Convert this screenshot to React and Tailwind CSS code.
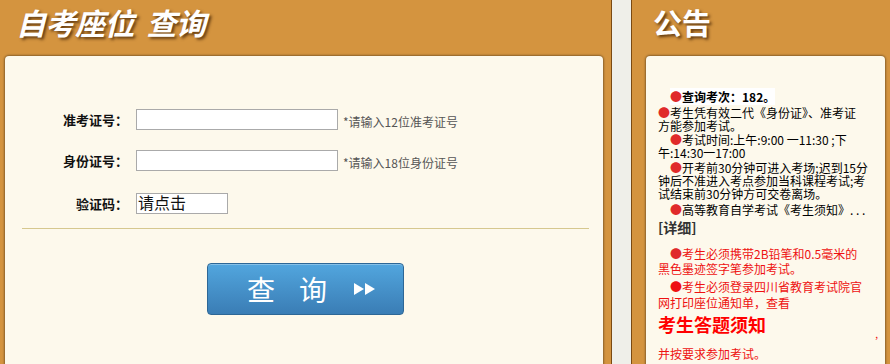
import React from "react";

const cjk = { fontFamily: '"Noto Sans CJK SC", "Noto Sans", sans-serif' };

function Dot() {
  return <span className="text-[#e02a2a]">●</span>;
}

function FormRow({ label, width, hint, children }) {
  return (
    <div className="flex items-center h-[21px]">
      <div className="w-[123px] text-right text-[13px] font-bold text-[#111] leading-[21px]">{label}</div>
      <div className="ml-[8px] flex items-center">
        {children || (
          <input
            type="text"
            className={`${width} h-[21px] bg-white border border-[#aaaaaa] outline-none`}
          />
        )}
        {hint && <span className="ml-[5px] text-[12px] text-[#555] leading-[21px] pt-[4px]">{hint}</span>}
      </div>
    </div>
  );
}

export default function App() {
  return (
    <div style={cjk} className="w-[890px] h-[364px] flex overflow-hidden bg-[#d4943f]">
      {/* 左侧查询 */}
      <div className="w-[611px] flex flex-col bg-[#d4943f]">
        <div className="h-[56px] pl-[16px] pt-[7px]">
          <h1 className="text-[30px] leading-[30px] font-bold italic text-white [text-shadow:2px_2px_3px_rgba(60,30,0,0.75)] tracking-[-0.5px]">
            自考座位&nbsp;&nbsp;查询
          </h1>
        </div>
        <div className="ml-[5px] w-[598px] flex-1 bg-[#fdf9ec] rounded-t-[4px] shadow-[0_0_2px_1px_rgba(0,0,0,0.35)]">
          <div className="pt-[53px] flex flex-col">
            <FormRow label="准考证号：" width="w-[202px]" hint="*请输入12位准考证号" />
            <div className="h-[20px]" />
            <FormRow label="身份证号：" width="w-[202px]" hint="*请输入18位身份证号" />
            <div className="h-[22px]" />
            <FormRow label="验证码：">
              <div className="w-[92px] h-[21px] bg-white border border-[#aaaaaa] text-[16px] leading-[17px] text-[#111] pl-[1px]">
                请点击
              </div>
            </FormRow>
          </div>
          <div className="mt-[14px] ml-[17px] mr-[14px] h-px bg-[#d6c88f]" />
          <div className="mt-[34px] flex justify-center pl-[3px]">
            <button
              type="button"
              className="w-[197px] h-[52px] rounded-[4px] border border-[#2d6796] bg-gradient-to-b from-[#52a6de] to-[#3a7db5] shadow-[inset_0_1px_0_rgba(255,255,255,0.3)] flex items-center pl-[39px] text-white"
            >
              <span className="text-[28px] leading-none">查</span>
              <span className="text-[28px] leading-none ml-[24px]">询</span>
              <svg width="22" height="12" viewBox="0 0 22 12" className="ml-[27px]">
                <polygon points="0,0 10,6 0,12" fill="white" />
                <polygon points="11,0 21,6 11,12" fill="white" />
              </svg>
            </button>
          </div>
        </div>
      </div>

      {/* 分隔 */}
      <div className="w-[21px] border-x border-[#7a4a12] bg-[#efefe9]" />

      {/* 公告 */}
      <div className="flex-1 flex flex-col bg-[#d4943f]">
        <div className="h-[56px] pl-[21px] pt-[7px]">
          <h2 className="text-[29px] leading-[30px] font-bold text-white [text-shadow:2px_2px_3px_rgba(60,30,0,0.75)]">
            公告
          </h2>
        </div>
        <div className="ml-[14px] w-[239px] flex-1 bg-[#fdf9ec] rounded-t-[4px] shadow-[0_0_2px_1px_rgba(0,0,0,0.35)] pl-[12px] pt-[34px] text-[12px] leading-[13px] text-black whitespace-nowrap">
          <div className="pl-[12px]">
            <span className="bg-white font-bold"><Dot />查询考次：182。</span>
          </div>
          <div className="mt-[3px]">
            <div><Dot />考生凭有效二代《身份证》、准考证</div>
            <div>方能参加考试。</div>
          </div>
          <div className="mt-[1px]">
            <div className="pl-[12px]"><Dot />考试时间:上午:9:00 一11:30 ;下</div>
            <div>午:14:30一17:00</div>
          </div>
          <div className="mt-[2px]">
            <div className="pl-[12px]"><Dot />开考前30分钟可进入考场;迟到15分</div>
            <div>钟后不准进入考点参加当科课程考试;考</div>
            <div>试结束前30分钟方可交卷离场。</div>
          </div>
          <div className="mt-[3px] pl-[12px]"><Dot />高等教育自学考试《考生须知》. . .</div>
          <div className="mt-[4px] text-[14px] leading-[14px] font-bold text-[#333]">[详细]</div>
          <div className="mt-[12px] text-[#ee1111]">
            <div className="leading-[15px]">
              <div className="pl-[12px]"><Dot />考生必须携带2B铅笔和0.5毫米的</div>
              <div>黑色墨迹签字笔参加考试。</div>
            </div>
            <div className="mt-[3px] leading-[16px]">
              <div className="pl-[12px]"><span className="text-[#ee1111]">●</span>考生必须登录四川省教育考试院官</div>
              <div>网打印座位通知单，查看</div>
            </div>
            <div className="mt-[2px] text-[18px] leading-[22px] font-bold text-[#ff0000]">考生答题须知</div>
            <div className="-mt-[4px] text-right pr-[7px] text-[10px] leading-[6px]">,</div>
            <div className="mt-[10px] leading-[14px]">并按要求参加考试。</div>
          </div>
        </div>
      </div>
    </div>
  );
}
